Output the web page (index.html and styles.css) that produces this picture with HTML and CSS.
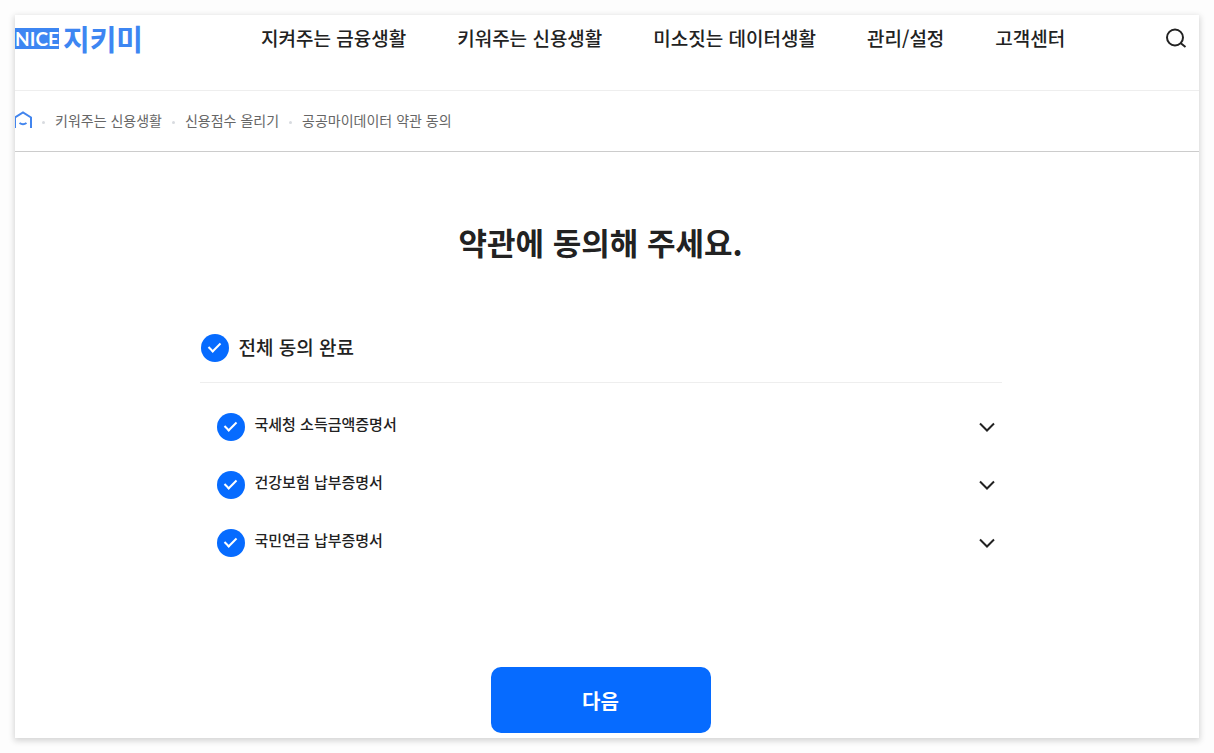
FILE: index.html
```html
<!DOCTYPE html>
<html lang="ko">

<head>
    <meta charset="UTF-8">
    <meta name="viewport" content="width=device-width, initial-scale=1.0">
    <title>NICE 지키미 - 공공마이데이터 약관 동의</title>
    <link rel="stylesheet" href="styles.css">
</head>

<body>
    <div class="page">
        <header class="header">
            <a href="/" class="logo"><span class="logo-nice">NICE</span><span class="logo-name">지키미</span></a>
            <nav class="menu">
                <a href="/protect">지켜주는 금융생활</a>
                <a href="/credit">키워주는 신용생활</a>
                <a href="/data">미소짓는 데이터생활</a>
                <a href="/settings">관리/설정</a>
                <a href="/help">고객센터</a>
            </nav>
            <button type="button" class="search" aria-label="검색">
                <svg width="22" height="22" viewBox="0 0 22 22" fill="none" stroke="#222" stroke-width="2">
                    <circle cx="10" cy="10.500" r="8"/>
                    <path d="M15.500 16L20.500 20"/>
                </svg>
            </button>
        </header>

        <nav class="breadcrumb">
            <a href="/" class="home" aria-label="홈">
                <svg width="17" height="18" viewBox="0 0 17 18" fill="none" stroke="#4285ee" stroke-width="2">
                    <path d="M0 17V6.500L8 1.500L16 6.500V17"/>
                    <path d="M4.500 12Q8 14.500 11.500 12"/>
                </svg>
            </a>
            <a href="/credit">키워주는 신용생활</a>
            <a href="/credit/score">신용점수 올리기</a>
            <a href="/credit/score/agree">공공마이데이터 약관 동의</a>
        </nav>

        <main class="content">
            <h1>약관에 동의해 주세요.</h1>

            <form class="agree">
                <div class="agree-all">
                    <input type="checkbox" id="all" checked>
                    <label for="all">전체 동의 완료</label>
                </div>
                <ul class="agree-list">
                    <li>
                        <input type="checkbox" id="income" checked>
                        <label for="income">국세청 소득금액증명서</label>
                        <button type="button" class="toggle" aria-label="국세청 소득금액증명서 펼치기">
                            <svg width="16" height="10" viewBox="0 0 16 10" fill="none" stroke="#222" stroke-width="2"><path d="M1 1.500L8 8.500L15 1.500"/></svg>
                        </button>
                    </li>
                    <li>
                        <input type="checkbox" id="health" checked>
                        <label for="health">건강보험 납부증명서</label>
                        <button type="button" class="toggle" aria-label="건강보험 납부증명서 펼치기">
                            <svg width="16" height="10" viewBox="0 0 16 10" fill="none" stroke="#222" stroke-width="2"><path d="M1 1.500L8 8.500L15 1.500"/></svg>
                        </button>
                    </li>
                    <li>
                        <input type="checkbox" id="pension" checked>
                        <label for="pension">국민연금 납부증명서</label>
                        <button type="button" class="toggle" aria-label="국민연금 납부증명서 펼치기">
                            <svg width="16" height="10" viewBox="0 0 16 10" fill="none" stroke="#222" stroke-width="2"><path d="M1 1.500L8 8.500L15 1.500"/></svg>
                        </button>
                    </li>
                </ul>
                <button type="submit" class="next">다음</button>
            </form>
        </main>
    </div>
</body>

</html>
```
FILE: styles.css
```css
* {
    box-sizing: border-box;
}

body {
    margin: 0;
    padding: 15px;
    background-color: #fdfdfd;
    color: #222;
    font-family: 'Noto Sans CJK KR', sans-serif;
}

h1, ul {
    margin: 0;
    padding: 0;
}

a {
    color: inherit;
    text-decoration: none;
}

button {
    padding: 0;
    border: 0;
    background: none;
    font-family: inherit;
    cursor: pointer;
}

svg {
    display: block;
}

.page {
    background-color: #fff;
    box-shadow: 0 2px 6px 1px rgba(0, 0, 0, 0.16);
}

/* header */
.header {
    display: flex;
    align-items: center;
    padding: 9px 12px 38px 0;
    border-bottom: 1px solid #eee;
}

.logo {
    display: flex;
    align-items: center;
    gap: 4px;
    width: 130px;
    color: #3d86f2;
}

.logo-nice {
    width: 44px;
    height: 21px;
    background-color: #3d86f2;
    color: #fff;
    font-family: 'Lato', sans-serif;
    font-size: 19px;
    font-weight: 700;
    line-height: 21px;
    text-align: center;
}

.logo-name {
    font-size: 29px;
    font-weight: 700;
    line-height: 28px;
    white-space: nowrap;
}

.menu {
    display: flex;
    gap: 51px;
    margin-left: 116px;
    font-size: 19px;
    font-weight: 500;
    line-height: 28px;
    white-space: nowrap;
}

.search {
    margin-left: auto;
}

/* breadcrumb */
.breadcrumb {
    display: flex;
    align-items: center;
    height: 61px;
    padding-bottom: 2px;
    border-bottom: 1px solid #ccc;
    color: #666;
    font-size: 14px;
    line-height: 20px;
}

.breadcrumb a + a::before {
    content: '';
    display: inline-block;
    width: 3px;
    height: 3px;
    margin: 0 10px;
    border-radius: 50%;
    background-color: #d8dbe0;
    vertical-align: middle;
}

/* terms */
.content {
    padding: 68px 13px 5px 0;
}

h1 {
    font-size: 31px;
    font-weight: 700;
    line-height: 44px;
    text-align: center;
}

.agree {
    display: flex;
    flex-direction: column;
    max-width: 802px;
    margin: 70px auto 0;
}

.agree-all {
    display: flex;
    align-items: center;
    gap: 10px;
    padding: 0 1px 20px;
    border-bottom: 1px solid #eee;
    font-size: 19px;
    font-weight: 500;
    line-height: 26px;
}

.agree-all label {
    padding-bottom: 2px;
}

.agree-list {
    display: flex;
    flex-direction: column;
    gap: 30px;
    padding: 30px 7px 0 17px;
    list-style: none;
}

.agree-list li {
    display: flex;
    align-items: center;
    gap: 10px;
    font-size: 15px;
    font-weight: 500;
    line-height: 22px;
}

.agree-list label {
    padding-bottom: 6px;
}

input[type='checkbox'] {
    display: grid;
    place-items: center;
    appearance: none;
    width: 28px;
    height: 28px;
    margin: 0;
    border-radius: 50%;
    background-color: #ccc;
}

input[type='checkbox']:checked {
    background-color: #066bff;
}

input[type='checkbox']::before {
    content: '';
    box-sizing: border-box;
    width: 7px;
    height: 12px;
    margin-bottom: 4px;
    border: solid #fff;
    border-width: 0 2px 2px 0;
    transform: rotate(45deg);
}

.toggle {
    margin-left: auto;
}

.next {
    align-self: center;
    width: 220px;
    height: 66px;
    margin-top: 110px;
    border-radius: 10px;
    background-color: #066bff;
    color: #fff;
    font-size: 20px;
    font-weight: 700;
}
```
